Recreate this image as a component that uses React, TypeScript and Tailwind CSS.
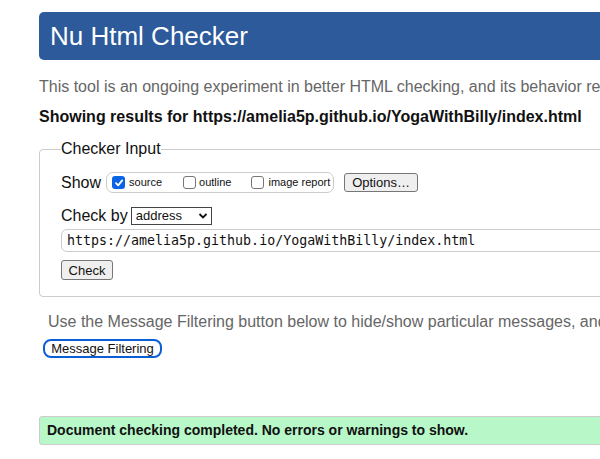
import React from "react";

const Box = ({ checked }: { checked?: boolean }) =>
  checked ? (
    <span className="flex h-[13px] w-[13px] shrink-0 items-center justify-center rounded-[3px] bg-[#0b63e5]">
      <svg width="10" height="10" viewBox="0 0 10 10">
        <path d="M2 5.2 L4.2 7.4 L8.2 2.4" fill="none" stroke="#fff" strokeWidth="1.8" strokeLinecap="round" strokeLinejoin="round" />
      </svg>
    </span>
  ) : (
    <span className="block h-[13px] w-[13px] shrink-0 rounded-[3px] border border-[#767676] bg-white" />
  );

export default function App() {
  return (
    <div className="h-[459px] w-[600px] overflow-hidden bg-white font-['Liberation_Sans',Arial,sans-serif] text-[#111]">
      <div className="w-[1000px] pl-[39px] pt-[12px]">
        <h1 className="flex h-[48px] items-center rounded-[5px] bg-[#2c5a9b] pl-[11px] text-[26px] text-white">
          Nu Html Checker
        </h1>
        <p className="mt-[18px] text-[16px] leading-[18px] text-[#666]">
          This tool is an ongoing experiment in better HTML checking, and its behavior remains subject to change
        </p>
        <p className="mt-[12px] text-[16px] font-bold leading-[18px] text-[#111]">
          Showing results for https://amelia5p.github.io/YogaWithBilly/index.html
        </p>

        <fieldset className="mt-[14px] rounded-[4px] border border-[#ccc] pb-[14px] pl-[21px]">
          <legend className="text-[16px] leading-[18px]">Checker Input</legend>

          <div className="mt-[14px] flex h-[21px] items-center">
            <span className="text-[16px] leading-[18px]">Show</span>
            <div className="ml-[5px] flex h-[21px] w-[228px] items-center rounded-[7px] border border-[#ccc] pl-[5px] text-[11px]">
              <Box checked />
              <span className="ml-[4px]">source</span>
              <span className="ml-[21px] flex"><Box /></span>
              <span className="ml-[3px]">outline</span>
              <span className="ml-[20px] flex"><Box /></span>
              <span className="ml-[4px]">image report</span>
            </div>
            <button className="ml-[10px] h-[19px] w-[74px] rounded-[3px] border border-[#767676] bg-[#efefef] text-[13px] leading-none">
              Options…
            </button>
          </div>

          <div className="mt-[14px] flex items-center">
            <span className="text-[16px] leading-[18px]">Check by</span>
            <div className="ml-[3px] flex h-[18px] w-[81px] items-center justify-between border border-[#444] pl-[4px] pr-[3px] text-[13px]">
              <span>address</span>
              <svg width="10" height="8" viewBox="0 0 10 8">
                <path d="M1.5 2 L5 5.5 L8.5 2" fill="none" stroke="#111" strokeWidth="1.8" />
              </svg>
            </div>
          </div>

          <div className="mt-[4px] flex h-[23px] items-center rounded-[6px] border border-[#ccc] pl-[5px] font-['DejaVu_Sans_Mono',monospace] text-[13.3px]">
            https://amelia5p.github.io/YogaWithBilly/index.html
          </div>

          <button className="mt-[8px] h-[20px] w-[52px] rounded-[3px] border border-[#767676] bg-[#efefef] text-[13px] leading-none">
            Check
          </button>
        </fieldset>

        <p className="ml-[9px] mt-[16px] text-[16px] leading-[18px] text-[#666]">
          Use the Message Filtering button below to hide/show particular messages, and to see total counts of errors and warnings.
        </p>
        <button className="ml-[4px] mt-[8px] flex h-[19px] w-[119px] items-center justify-center rounded-[8px] border-2 border-[#0b5fd6] bg-white text-[13px] leading-none">
          Message Filtering
        </button>

        <div className="mt-[58px] flex h-[29px] items-center rounded-[3px] border border-[#ccc] bg-[#b8f8c8] pl-[7px] text-[14px] font-bold">
          Document checking completed. No errors or warnings to show.
        </div>
      </div>
    </div>
  );
}
